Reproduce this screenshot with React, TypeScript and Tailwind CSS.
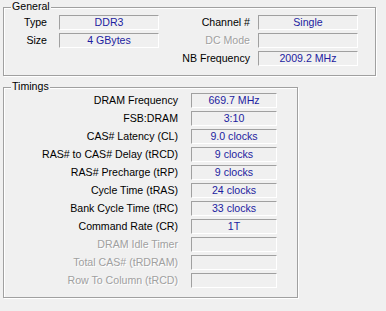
import React from 'react';

const GROUP =
  'relative ml-[3px] border border-[#a0a0a0] shadow-[inset_1px_1px_0_#fff,1px_1px_0_#fff]';
const BOX =
  'flex items-center justify-center h-[15px] border border-t-[#a0a0a0] border-l-[#a0a0a0] border-r-white border-b-white text-[#1c1ca0] leading-[13px]';
const DISABLED = 'text-[#a0a0a0] [text-shadow:1px_1px_0_#fff]';

function Legend({ children }: { children: React.ReactNode }) {
  return (
    <span className="absolute left-[7px] -top-[8px] px-[1px] bg-[#f0f0f0] leading-[13px] text-black">
      {children}
    </span>
  );
}

function Field({ value, width }: { value?: string; width: string }) {
  return <div className={`${BOX} ${width}`}>{value}</div>;
}

const timings: { label: string; value?: string }[] = [
  { label: 'DRAM Frequency', value: '669.7 MHz' },
  { label: 'FSB:DRAM', value: '3:10' },
  { label: 'CAS# Latency (CL)', value: '9.0 clocks' },
  { label: 'RAS# to CAS# Delay (tRCD)', value: '9 clocks' },
  { label: 'RAS# Precharge (tRP)', value: '9 clocks' },
  { label: 'Cycle Time (tRAS)', value: '24 clocks' },
  { label: 'Bank Cycle Time (tRC)', value: '33 clocks' },
  { label: 'Command Rate (CR)', value: '1T' },
  { label: 'DRAM Idle Timer' },
  { label: 'Total CAS# (tRDRAM)' },
  { label: 'Row To Column (tRCD)' },
];

export default function App() {
  return (
    <div className="w-full h-[311px] bg-[#f0f0f0] pt-[7px] font-['Liberation_Sans',Arial,sans-serif] text-[10.6px] leading-[15px] text-black">
      {/* General */}
      <div className={`${GROUP} w-[373px] h-[69px]`}>
        <Legend>General</Legend>
        <div className="flex flex-col gap-[3px] pt-[7px]">
          <div className="flex items-center h-[15px]">
            <span className="w-[43px] text-right">Type</span>
            <Field value="DDR3" width="w-[100px] ml-[12px]" />
            <span className="w-[91px] text-right">Channel #</span>
            <Field value="Single" width="w-[100px] ml-[8px]" />
          </div>
          <div className="flex items-center h-[15px]">
            <span className="w-[43px] text-right">Size</span>
            <Field value="4 GBytes" width="w-[100px] ml-[12px]" />
            <span className={`w-[91px] text-right ${DISABLED}`}>DC Mode</span>
            <Field width="w-[100px] ml-[8px]" />
          </div>
          <div className="flex items-center h-[15px]">
            <span className="w-[155px]" />
            <span className="w-[91px] text-right">NB Frequency</span>
            <Field value="2009.2 MHz" width="w-[100px] ml-[8px]" />
          </div>
        </div>
      </div>

      {/* Timings */}
      <div className={`${GROUP} mt-[11px] w-[295px] h-[211px]`}>
        <Legend>Timings</Legend>
        <div className="flex flex-col gap-[3px] pt-[5px]">
          {timings.map((t) => (
            <div key={t.label} className="flex items-center h-[15px]">
              <span className={`w-[174px] text-right ${t.value ? '' : DISABLED}`}>{t.label}</span>
              <Field value={t.value} width="w-[86px] ml-[13px]" />
            </div>
          ))}
        </div>
      </div>
    </div>
  );
}
